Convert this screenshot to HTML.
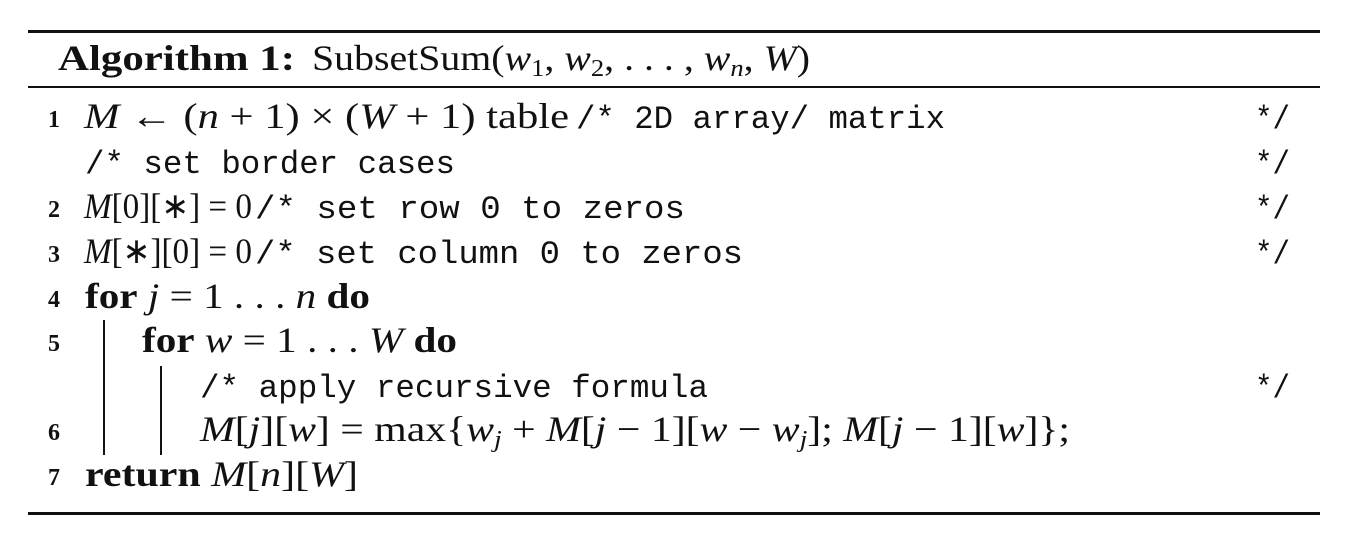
<!DOCTYPE html>
<html><head><meta charset="utf-8"><style>
body{margin:0;width:1351px;height:541px;background:#fff;overflow:hidden}
svg{display:block}
text{font-family:"Liberation Serif",serif;font-size:36px;fill:#111}
.m{font-family:"Liberation Mono",monospace;font-size:32.5px}
.n{font-size:24px;font-weight:bold}
.b{font-weight:bold}
.i{font-style:italic}
.s{font-size:24px}
</style></head><body>
<svg width="1351" height="541" viewBox="0 0 1351 541">
<rect x="28" y="30" width="1292" height="3" fill="#111"/>
<rect x="28" y="86" width="1292" height="2" fill="#111"/>
<rect x="28" y="512" width="1292" height="3" fill="#111"/>
<rect x="103" y="320" width="2" height="135" fill="#111"/>
<rect x="160" y="366" width="2" height="89" fill="#111"/>

<text x="58" y="70" class="b" textLength="237" lengthAdjust="spacingAndGlyphs">Algorithm 1:</text>
<text x="312" y="70" textLength="498" lengthAdjust="spacingAndGlyphs">SubsetSum(<tspan class="i">w</tspan><tspan class="s" dy="6">1</tspan><tspan dy="-6">, </tspan><tspan class="i">w</tspan><tspan class="s" dy="6">2</tspan><tspan dy="-6">, . . . , </tspan><tspan class="i">w</tspan><tspan class="s i" dy="6">n</tspan><tspan dy="-6">, </tspan><tspan class="i">W</tspan>)</text>

<text x="48" y="127" class="n">1</text>
<text x="84" y="128" textLength="485" lengthAdjust="spacingAndGlyphs"><tspan class="i">M</tspan> ← (<tspan class="i">n</tspan> + 1) × (<tspan class="i">W</tspan> + 1) table</text>
<text x="576" y="128" class="m" textLength="369" lengthAdjust="spacingAndGlyphs">/* 2D array/ matrix</text>
<text x="1255" y="128" class="m" textLength="35" lengthAdjust="spacingAndGlyphs">*/</text>

<text x="85" y="173" class="m" textLength="370" lengthAdjust="spacingAndGlyphs">/* set border cases</text>
<text x="1255" y="173" class="m" textLength="35" lengthAdjust="spacingAndGlyphs">*/</text>

<text x="48" y="217" class="n">2</text>
<text x="84" y="218" textLength="168" lengthAdjust="spacingAndGlyphs"><tspan class="i">M</tspan>[0][∗] = 0</text>
<text x="255" y="218" class="m" textLength="430" lengthAdjust="spacingAndGlyphs">/* set row 0 to zeros</text>
<text x="1255" y="218" class="m" textLength="35" lengthAdjust="spacingAndGlyphs">*/</text>

<text x="48" y="262" class="n">3</text>
<text x="84" y="263" textLength="168" lengthAdjust="spacingAndGlyphs"><tspan class="i">M</tspan>[∗][0] = 0</text>
<text x="255" y="263" class="m" textLength="488" lengthAdjust="spacingAndGlyphs">/* set column 0 to zeros</text>
<text x="1255" y="263" class="m" textLength="35" lengthAdjust="spacingAndGlyphs">*/</text>

<text x="48" y="307" class="n">4</text>
<text x="85" y="308" textLength="285" lengthAdjust="spacingAndGlyphs"><tspan class="b">for</tspan> <tspan class="i">j</tspan> = 1 . . . <tspan class="i">n</tspan> <tspan class="b">do</tspan></text>

<text x="48" y="351" class="n">5</text>
<text x="142" y="352" textLength="315" lengthAdjust="spacingAndGlyphs"><tspan class="b">for</tspan> <tspan class="i">w</tspan> = 1 . . . <tspan class="i">W</tspan> <tspan class="b">do</tspan></text>

<text x="200" y="397" class="m" textLength="508" lengthAdjust="spacingAndGlyphs">/* apply recursive formula</text>
<text x="1255" y="397" class="m" textLength="35" lengthAdjust="spacingAndGlyphs">*/</text>

<text x="48" y="440" class="n">6</text>
<text x="200" y="441" textLength="870" lengthAdjust="spacingAndGlyphs"><tspan class="i">M</tspan>[<tspan class="i">j</tspan>][<tspan class="i">w</tspan>] = max{<tspan class="i">w</tspan><tspan class="s i" dy="6">j</tspan><tspan dy="-6"> + </tspan><tspan class="i">M</tspan>[<tspan class="i">j</tspan> − 1][<tspan class="i">w</tspan> − <tspan class="i">w</tspan><tspan class="s i" dy="6">j</tspan><tspan dy="-6">]; </tspan><tspan class="i">M</tspan>[<tspan class="i">j</tspan> − 1][<tspan class="i">w</tspan>]};</text>

<text x="48" y="485" class="n">7</text>
<text x="85" y="486" textLength="273" lengthAdjust="spacingAndGlyphs"><tspan class="b">return</tspan> <tspan class="i">M</tspan>[<tspan class="i">n</tspan>][<tspan class="i">W</tspan>]</text>
</svg>
</body></html>
